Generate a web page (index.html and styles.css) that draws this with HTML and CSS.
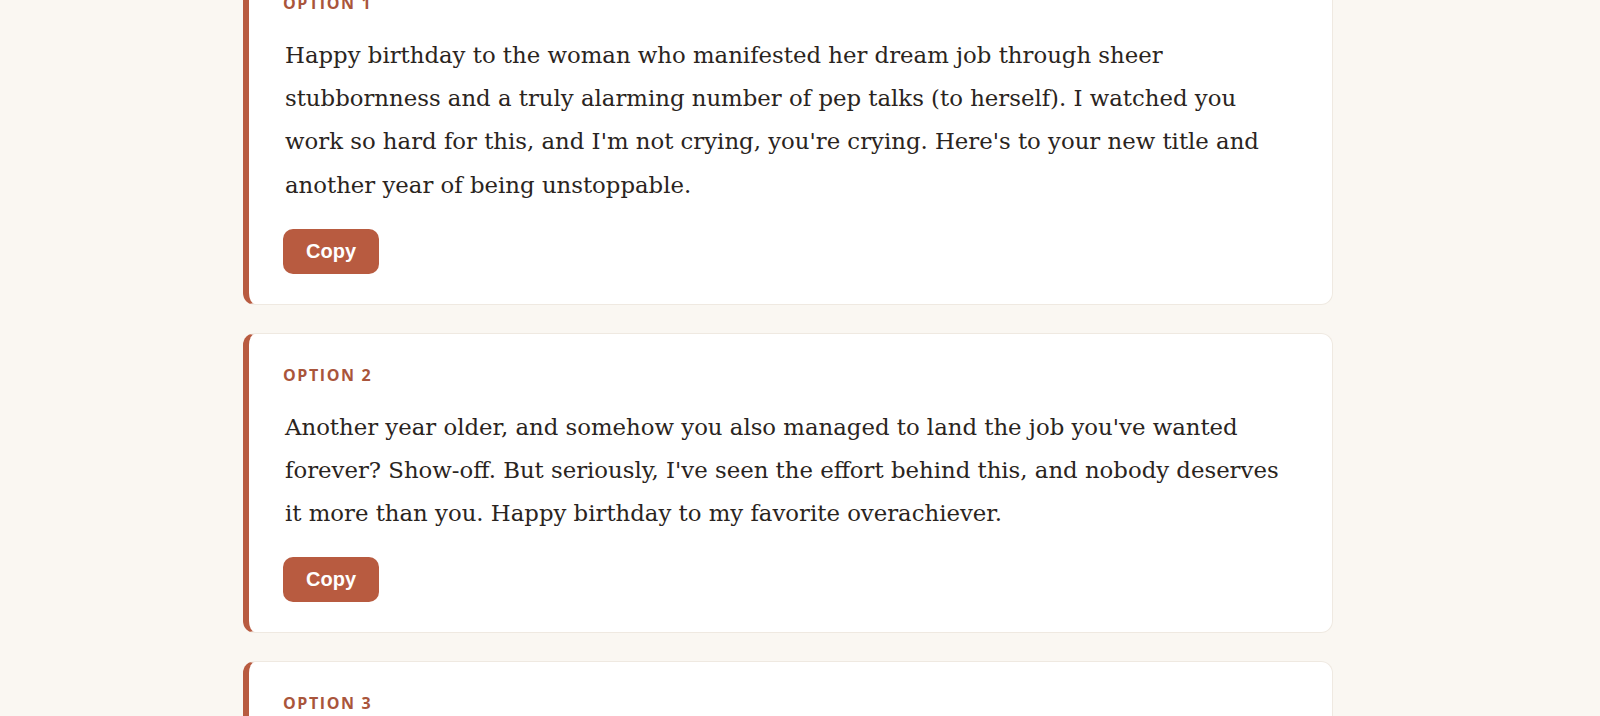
FILE: index.html
```html
<!DOCTYPE html>
<html lang="en">
  <head>
    <meta charset="UTF-8" />
    <meta name="viewport" content="width=device-width, initial-scale=1.0" />
    <title>Birthday Messages</title>
    <link rel="stylesheet" href="styles.css">
  </head>
  <body>
    <main class="results">
      <article class="option-card">
        <h3 class="option-label">Option 1</h3>
        <p class="option-text">Happy birthday to the woman who manifested her dream job through sheer stubbornness and a truly alarming number of pep talks (to herself). I watched you work so hard for this, and I'm not crying, you're crying. Here's to your new title and another year of being unstoppable.</p>
        <button class="copy-btn">Copy</button>
      </article>

      <article class="option-card">
        <h3 class="option-label">Option 2</h3>
        <p class="option-text">Another year older, and somehow you also managed to land the job you've wanted forever? Show-off. But seriously, I've seen the effort behind this, and nobody deserves it more than you. Happy birthday to my favorite overachiever.</p>
        <button class="copy-btn">Copy</button>
      </article>

      <article class="option-card">
        <h3 class="option-label">Option 3</h3>
      </article>
    </main>
  </body>
</html>
```

FILE: styles.css
```css
* {
  margin: 0;
  padding: 0;
  box-sizing: border-box;
}

body {
  font-family: Georgia, "DejaVu Serif", serif;
  background: #faf7f2;
  color: #2a2420;
  padding-right: 24px;
}

.results {
  max-width: 1090px;
  margin: -39px auto 0;
  display: flex;
  flex-direction: column;
  gap: 28px;
  padding-bottom: 40px;
}

.option-card {
  background: #fff;
  border: 1px solid #efe9e1;
  border-left: 6px solid #b85b40;
  border-radius: 12px;
  padding: 30px 34px;
  min-height: 120px;
}

.option-label {
  font-family: "Open Sans", sans-serif;
  font-size: 16px;
  line-height: 22px;
  font-weight: 700;
  letter-spacing: 0.1em;
  text-transform: uppercase;
  color: #a9553b;
  margin-bottom: 20px;
}

.option-text {
  font-size: 22.8px;
  line-height: 43.2px;
  margin-bottom: 22px;
  padding-left: 2px;
  max-width: 1004px;
}

.copy-btn {
  font-family: "Liberation Sans", Arial, sans-serif;
  font-size: 20px;
  font-weight: 700;
  color: #fff;
  background: #b85b40;
  border: none;
  border-radius: 10px;
  padding: 11px 23px;
  cursor: pointer;
}
```
